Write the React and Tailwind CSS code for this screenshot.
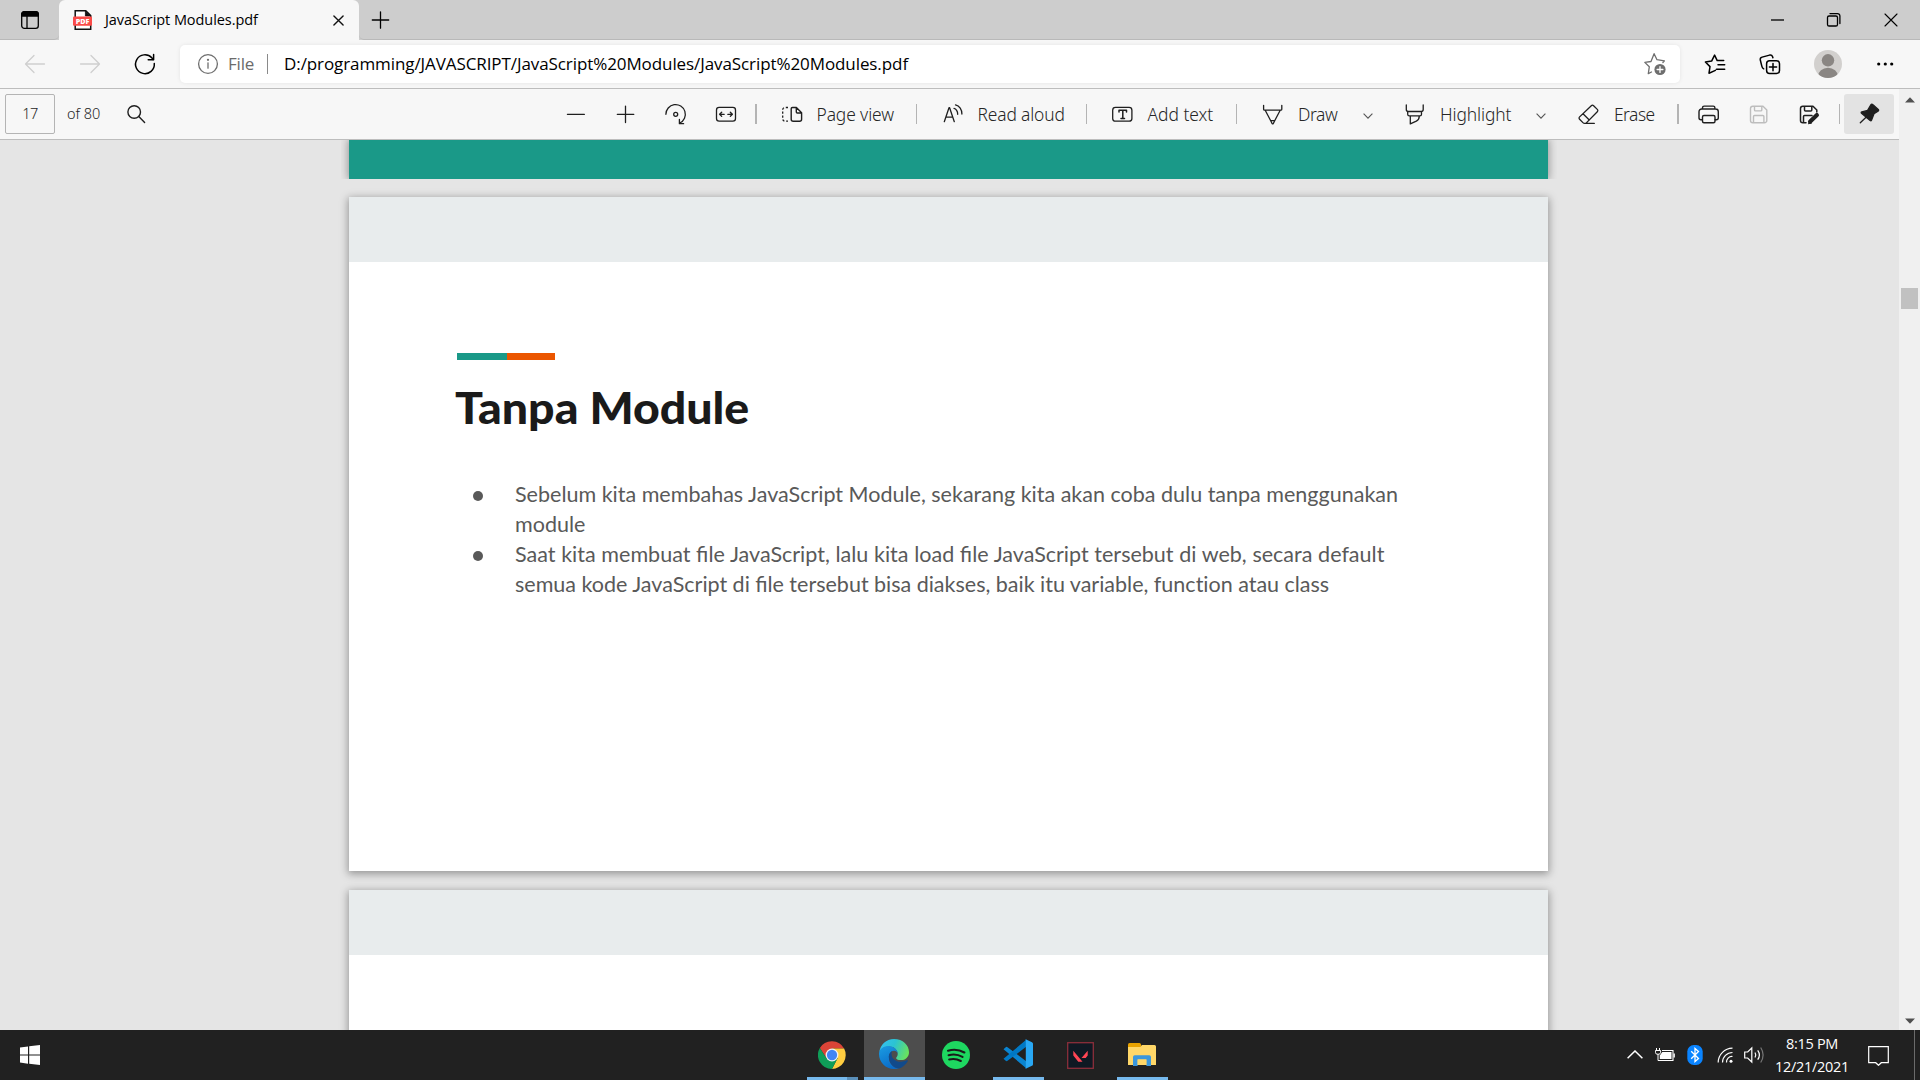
import React from "react";

/* Outline icon on a 30px grid */
function Icon({ children, className = "" }) {
  return (
    <svg
      viewBox="0 0 30 30"
      className={`block h-[30px] w-[30px] shrink-0 ${className}`}
      fill="none"
      stroke="currentColor"
      strokeWidth="1.3"
      strokeLinecap="round"
      strokeLinejoin="round"
    >
      {children}
    </svg>
  );
}

function TabStrip() {
  return (
    <div className="flex h-10 shrink-0 bg-[#cdcdcd]">
      <div className="flex w-[59px] items-start justify-center rounded-br-[5px] border-b border-[#b9b9b9] bg-[#cdcdcd] pt-[5px] text-black">
        <Icon>
          <rect x="6.7" y="6.7" width="16.6" height="16.6" rx="2.6" />
          <path d="M6.7 11V9.3a2.6 2.6 0 0 1 2.6-2.6h11.4a2.6 2.6 0 0 1 2.6 2.6V11z" fill="currentColor" />
          <path d="M12 11v12" />
        </Icon>
      </div>
      <div className="flex w-[300px] items-center rounded-t-[6px] bg-[#f7f7f7]">
        <svg viewBox="0 0 20 20" className="ml-[14px] h-5 w-5 shrink-0">
          <path d="M2.2.8h10.6l4.900 4.700v13.700H2.200z" fill="#fff" stroke="#111" strokeWidth="1.5" />
          <path d="M12.400 1v5h5z" fill="#111" stroke="#111" strokeWidth=".8" />
          <rect x="0" y="6.600" width="19" height="9.200" rx="1" fill="#fa4b48" />
          <text x="9.500" y="13.900" textAnchor="middle" fontFamily="Open Sans, sans-serif" fontWeight="800" fontSize="7.200" fill="#fff">PDF</text>
        </svg>
        <span className="ml-3 w-[228px] shrink-0 whitespace-nowrap text-[14.5px] leading-[38px] tracking-[-0.06px] text-black">
          JavaScript Modules.pdf
        </span>
        <svg viewBox="0 0 12 12" className="mt-px h-[11px] w-[11px] shrink-0" stroke="#111" strokeWidth="1.500" strokeLinecap="round">
          <path d="M1 1l10 10M11 1L1 11" />
        </svg>
      </div>
      <div className="flex flex-1 items-start rounded-bl-[5px] border-b border-[#b9b9b9] text-black">
        <Icon className="ml-[6px] mt-[4.5px]">
          <path d="M7.3 15h16.4M15.500 6.800v16.400" />
        </Icon>
        <div className="ml-auto mt-[4.5px] flex">
          <Icon className="mr-[27px]">
            <path d="M9 15h13" strokeLinecap="butt" />
          </Icon>
          <Icon className="mr-[27px]">
            <rect x="8.500" y="11" width="10" height="10" rx="1.600" />
            <path d="M11 8.600h7.500a2.400 2.400 0 0 1 2.400 2.400v7.500" />
          </Icon>
          <Icon className="mr-[14px]">
            <path d="M9 9l12 12M21 9L9 21" strokeWidth="1.100" />
          </Icon>
        </div>
      </div>
    </div>
  );
}

function AddressBar() {
  return (
    <div className="flex h-[49px] shrink-0 items-center border-b border-[#bdbdbd] bg-[#f7f7f7] pb-px text-black">
      <Icon className="ml-5 text-[#cfcfcf]">
        <path d="M24.500 15H5.800M14 6.500L5.500 15l8.500 8.500" />
      </Icon>
      <Icon className="ml-[25px] text-[#cfcfcf]">
        <path d="M5.500 15h18.700M16 6.500L24.500 15 16 23.500" />
      </Icon>
      <Icon className="ml-[25px]">
        <path d="M24.300 14.500a9.400 9.400 0 1 1-2.500-5.700l1.300 1.700" strokeWidth="1.500" />
        <path d="M23.600 5.500v5.200h-5.400" strokeWidth="1.500" />
      </Icon>
      <div className="ml-5 flex h-[38px] w-[1500px] items-center rounded-[5px] bg-white shadow-[0_0_4px_rgba(0,0,0,0.08)]">
        <Icon className="ml-[12.5px] text-[#6e6e6e]">
          <circle cx="15" cy="15" r="9.400" />
          <path d="M15 13.800v5.400" />
          <circle cx="15" cy="10.800" r=".5" fill="currentColor" />
        </Icon>
        <span className="ml-[5.5px] w-[38.5px] text-[17px] tracking-[-0.2px] text-[#6b6b6b]">File</span>
        <span className="mr-4 h-5 w-[1.5px] bg-[#8a8a8a]" />
        <span className="whitespace-nowrap text-[17px] tracking-[-0.087px] text-black">
          D:/programming/JAVASCRIPT/JavaScript%20Modules/JavaScript%20Modules.pdf
        </span>
        <Icon className="ml-auto mr-[10px] text-[#6e6e6e]">
          <path d="M11.500 23.800l-3.200 1.600 1-6.800-4.500-4.400 6.200-.9L14.100 5.500l2.900 6 7.400 1.200-1.500 1.600" transform="translate(0 -.8)" />
          <circle cx="20" cy="20.500" r="5.600" fill="#6e6e6e" stroke="none" />
          <path d="M20 17.600v5.800M17.100 20.500h5.800" stroke="#fff" />
        </Icon>
      </div>
      <Icon className="ml-5">
        <path d="M15.400 21.400L9 24.200l1-6.600-4.600-4.600 6.200-.9 3-6 2.600 5.500h6.500M18 15.700h6.700M16.500 20.300h8.200" strokeWidth="1.500" />
      </Icon>
      <Icon className="ml-[25px]">
        <rect x="11.600" y="11.700" width="12.900" height="12.700" rx="3" strokeWidth="1.500" />
        <path d="M18 14.500v7.200M14.400 18.100h7.200" strokeWidth="1.500" />
        <path d="M8.700 19.800c-1.200-.6-1.600-1.500-1.900-2.700L5.300 11c-.3-1.400.4-2.500 1.800-2.900l7.500-2c1.400-.3 2.500.3 3 1.700l.3 1" strokeWidth="1.500" />
      </Icon>
      <svg viewBox="0 0 28 28" className="ml-[29px] h-7 w-7">
        <defs>
          <clipPath id="avatar"><circle cx="14" cy="14" r="14" /></clipPath>
        </defs>
        <g clipPath="url(#avatar)">
          <rect width="28" height="28" fill="#d2d0ce" />
          <circle cx="14" cy="10.300" r="6.200" fill="#8a8683" />
          <ellipse cx="14" cy="26.500" rx="10" ry="8.700" fill="#8a8683" />
        </g>
      </svg>
      <Icon className="ml-7">
        <g fill="currentColor" stroke="none">
          <circle cx="8.700" cy="15" r="1.600" />
          <circle cx="15.300" cy="15" r="1.600" />
          <circle cx="21.700" cy="15" r="1.600" />
        </g>
      </Icon>
    </div>
  );
}

function Separator({ className = "" }) {
  return <span className={`h-5 shrink-0 bg-[#b4b4b4] ${className}`} />;
}

function Label({ children, size = "text-[17.400px]", className = "" }) {
  return (
    <span className={`shrink-0 whitespace-nowrap font-['Noto_Sans','Open_Sans',sans-serif] font-[350] text-[#262626] ${size} ${className}`}>
      {children}
    </span>
  );
}

function Chevron() {
  return (
    <svg viewBox="0 0 10 6" className="mt-[3px] h-[6px] w-[10px] shrink-0" fill="none" stroke="#555" strokeWidth="1.100">
      <path d="M.6.7L5 5.200 9.400.7" />
    </svg>
  );
}

function PdfToolbar() {
  return (
    <div className="flex h-[51px] shrink-0 items-center border-b border-[#bdbdbd] bg-[#f7f7f7] pl-[5px] text-[#1f1f1f]">
      <div className="flex h-10 w-[50px] items-center justify-center rounded-[2px] border border-[#b4b4b4]">
        <Label size="text-[14.500px]" className="tracking-[-0.500px]">17</Label>
      </div>
      <Label size="text-[14.500px]" className="ml-3 w-[54px]">of 80</Label>
      <Icon>
        <circle cx="13.200" cy="13" r="6.300" strokeWidth="1.400" />
        <path d="M17.800 17.600l5.800 6" strokeWidth="1.400" />
      </Icon>
      <div className="ml-[410px] flex items-center gap-5">
        <Icon><path d="M6.400 15.300h17" /></Icon>
        <Icon><path d="M6.300 15.300h16.500M14.500 7.100v16.500" /></Icon>
        <Icon>
          <path d="M4.900 15.300a9.700 9.700 0 1 1 13.900 8.700M18.400 20.500v4.200h4.200" />
          <circle cx="14.700" cy="15.300" r="2" />
        </Icon>
        <Icon>
          <rect x="5.500" y="8.400" width="19" height="13.800" rx="2.600" />
          <path d="M13.200 15.300H8.800M10.700 13.200l-2.100 2.100 2.100 2.100M16.800 15.300h4.400M19.300 13.200l2.100 2.100-2.100 2.100" />
        </Icon>
      </div>
      <Separator className="ml-[14px] w-[1.500px]" />
      <Icon className="ml-[20px]">
        <path d="M11 8.500H8a2.300 2.300 0 0 0-2.300 2.300v9A2.300 2.300 0 0 0 8 22.200h3" strokeDasharray="2.200 1.800" strokeLinecap="butt" />
        <path d="M14.200 9.700c0-.8.500-1.200 1.200-1.200h4l5.200 5.200v6.500a2 2 0 0 1-2 2h-6.400a2 2 0 0 1-2-2zM19.300 8.500V13a1 1 0 0 0 1 1h4.300" strokeWidth="1.400" />
      </Icon>
      <Label className="ml-[10px] w-[99px] tracking-[-0.100px]">Page view</Label>
      <Separator className="w-px" />
      <Icon className="ml-[22px]">
        <path d="M5.300 22.700L10 8.700h.6l4.700 14M6.900 18.200h6.800" />
        <path d="M15 9.300c2 .4 3.800 3 3.700 6M16.500 5.800c4 1 6.500 5 6.400 9.300" />
      </Icon>
      <Label className="ml-[9px] w-[108px] tracking-[-0.150px]">Read aloud</Label>
      <Separator className="w-[1.500px]" />
      <Icon className="ml-[19.500px]">
        <rect x="5.700" y="8.400" width="19.200" height="13.800" rx="2.800" />
        <path d="M12 13v-1.700h7.500V13M15.800 11.300v8M14 19.400h3.500" strokeWidth="1.500" />
      </Icon>
      <Label className="ml-[11px] w-[88px]">Add text</Label>
      <Separator className="w-px" />
      <Icon className="ml-[21.500px]">
        <path d="M5.600 6.300v3.900a1 1 0 0 0 1 1h16.200a1 1 0 0 0 1-1V6.300M7.200 11.200l5.500 10.600 1.500 3h1l1.500-3 5.500-10.600M12.700 21.600h4" />
      </Icon>
      <Label className="ml-[10px] w-[65px] tracking-[-0.400px]">Draw</Label>
      <Chevron />
      <Icon className="ml-[27px]">
        <path d="M6.300 5.900v4.600a2 2 0 0 0 2 2h12.900a2 2 0 0 0 2-2V5.900M7.700 12.600v2.600c0 1 .7 1.600 1.600 1.600h10.600c1 0 1.600-.6 1.600-1.600v-2.600M10.300 16.900v8l6-2.800c2-1 3-2 3-5.200" />
      </Icon>
      <Label className="ml-[10px] w-[96px] tracking-[-0.100px]">Highlight</Label>
      <Chevron />
      <Icon className="ml-[27px]">
        <path d="M18.300 6.700c.7-.7 1.600-.7 2.300 0l3.700 3.700c.7.7.7 1.600 0 2.300L13.600 23.600c-1 1-2.700 1-3.700 0l-3.300-3.300c-.7-.7-.7-1.700 0-2.400zM10 14.800l6.300 6.200M11.500 24.400h9.800" />
      </Icon>
      <Label className="ml-[11px] w-[63px] tracking-[-0.500px]">Erase</Label>
      <Separator className="w-[1.500px]" />
      <Icon className="ml-[15px]">
        <path d="M8.500 10V8.800a1.700 1.700 0 0 1 1.700-1.700h9a1.700 1.700 0 0 1 1.700 1.700V10M8.300 20.800H7a2 2 0 0 1-2-2v-6A2.700 2.700 0 0 1 7.700 10h13.900a2.700 2.700 0 0 1 2.700 2.700v6a2 2 0 0 1-2 2h-1.200" strokeWidth="1.400" />
        <rect x="8.500" y="16.500" width="12.500" height="7.200" rx="1.500" strokeWidth="1.400" />
      </Icon>
      <Icon className="ml-[20px] text-[#bdbdbd]">
        <path d="M6.500 9.500a2.300 2.300 0 0 1 2.300-2.300H19L22.800 11v10.500a2.300 2.300 0 0 1-2.300 2.300H8.800a2.300 2.300 0 0 1-2.300-2.300zM10.500 7.200v3.700a1 1 0 0 0 1 1h5.300a1 1 0 0 0 1-1V7.200M9.500 23.800v-6.300a1 1 0 0 1 1-1h8.400a1 1 0 0 1 1 1v6.300" strokeWidth="1.400" />
      </Icon>
      <Icon className="ml-[20px]">
        <path d="M12 23.800H8.800a2.300 2.300 0 0 1-2.300-2.300v-12a2.300 2.300 0 0 1 2.300-2.300H19L22.800 11v2M10.500 7.200v3.700a1 1 0 0 0 1 1h5.300a1 1 0 0 0 1-1V7.200M9.500 23.800v-6.300a1 1 0 0 1 1-1h7.500" strokeWidth="1.500" />
        <path d="M16.200 22.600l6.700-6.500" strokeWidth="4.200" />
        <path d="M14 25.200l.8-4 3.300 3.200z" fill="currentColor" stroke="none" />
      </Icon>
      <Separator className="ml-[15px] w-px" />
      <div className="ml-auto mr-[5px] flex h-10 w-[50px] items-center justify-center rounded-[3px] bg-[#e3e3e3]">
        <Icon>
          <path d="M17 5.700c.5-.8 1.100-.8 1.700-.2l5.600 5c.6.600.4 1.200-.3 1.600l-4 2.700-2.400 6.300c-.3.800-.9.900-1.500.3L7.500 14.300c-.6-.6-.4-1.200.4-1.400l5.700-1.500zM11.800 18.500l-5.500 5.200" fill="currentColor" />
        </Icon>
      </div>
    </div>
  );
}

function SlidePage({ children, className = "" }) {
  return (
    <section className={`w-[1199px] shrink-0 bg-white shadow-[0_2px_8px_1px_rgba(0,0,0,0.35)] ${className}`}>
      <div className="h-[65px] bg-[#e8eced]" />
      {children}
    </section>
  );
}

function Bullet({ children }) {
  return (
    <li className="flex">
      <span className="mr-[32px] mt-[12px] h-[10px] w-[10px] shrink-0 rounded-full bg-[#595959]" />
      <span className="flex flex-col whitespace-nowrap">{children}</span>
    </li>
  );
}

function Document() {
  return (
    <main className="flex flex-1 flex-col overflow-hidden bg-[#e5e5e5] pl-[349px] font-['Lato',sans-serif]">
      <div className="-ml-2 w-[1216px] shrink-0 overflow-hidden pl-2">
        <div className="h-[39px] w-[1199px] bg-[#1a9988] shadow-[0_0_8px_1px_rgba(0,0,0,0.35)]" />
      </div>
      <SlidePage className="mt-[18px] h-[674px]">
        <div className="ml-[108px] mt-[91px] flex h-[7px]">
          <span className="w-[50px] bg-[#1a9988]" />
          <span className="w-12 bg-[#eb5600]" />
        </div>
        <h1 className="ml-[105.500px] mt-[21px] w-max origin-left scale-x-[1.072] whitespace-nowrap text-[43.330px] font-black leading-[52px] text-[#1a1a1a]">
          Tanpa Module
        </h1>
        <ul className="ml-[124px] mt-[46px] text-[21.530px] leading-[30px] text-[#595959]">
          <Bullet>
            <span>Sebelum kita membahas JavaScript Module, sekarang kita akan coba dulu tanpa menggunakan</span>
            <span>module</span>
          </Bullet>
          <Bullet>
            <span className="[word-spacing:0.170px]">Saat kita membuat file JavaScript, lalu kita load file JavaScript tersebut di web, secara default</span>
            <span className="[word-spacing:-0.100px]">
              semua kode JavaScript di file tersebut bisa diakses, baik itu variable,{" "}
              <span className="[font-variant-ligatures:none]">function</span> atau class
            </span>
          </Bullet>
        </ul>
      </SlidePage>
      <SlidePage className="mt-[19px] h-[674px]" />
    </main>
  );
}

function Scrollbar() {
  return (
    <div className="flex w-[21px] shrink-0 flex-col items-center bg-[#f0f0f0]">
      <svg viewBox="0 0 10 6" className="mt-[8px] h-[6px] w-[10px]"><path d="M0 5.500L5 .3l5 5.200z" fill="#505050" /></svg>
      <div className="mt-[185px] h-[21px] w-[17px] bg-[#c1c1c1]" />
      <svg viewBox="0 0 10 6" className="mb-[6px] mt-auto h-[6px] w-[10px]"><path d="M0 .5L5 5.700 10 .5z" fill="#505050" /></svg>
    </div>
  );
}

function TaskButton({ children, className = "", bar = "w-[51px] bg-[#76b9ed]" }) {
  return (
    <div className={`flex h-[50px] w-[61px] shrink-0 flex-col items-center ${className}`}>
      <div className="flex flex-1 items-center pr-px pt-[3px]">{children}</div>
      <div className={`h-[3px] ${bar}`} />
    </div>
  );
}

function Taskbar() {
  return (
    <footer className="flex h-[50px] shrink-0 bg-[#212121] text-white">
      <svg viewBox="0 0 20 20" className="ml-5 mt-[15px] h-5 w-5" fill="#fff">
        <path d="M0 2.500L8 1.400V9.400H0zM9.200 1.200L20 0v9.400H9.200zM0 10.500h8v8.200l-8-1.200zM9.200 10.500H20V20L9.200 18.800z" />
      </svg>
      <div className="ml-[762px] flex gap-px">
        <TaskButton bar="w-[51px] bg-linear-to-r from-[#76b9ed] from-78% to-[#5a8fb9] to-78%">
          <svg viewBox="0 0 48 48" className="h-7 w-7">
            <path d="M24 13h20.800A24 24 0 0 0 3.200 12l11.300 17.500z" fill="#db4437" />
            <path d="M33.500 29.500L24 48A24 24 0 0 0 44.800 13H24z" fill="#ffcd40" />
            <path d="M14.500 29.500L3.200 12A24 24 0 0 0 24 48l9.500-18.500z" fill="#0f9d58" />
            <circle cx="24" cy="24" r="11" fill="#f1f1f1" />
            <circle cx="24" cy="24" r="8.800" fill="#4285f4" />
          </svg>
        </TaskButton>
        <TaskButton className="bg-[#4d4d4d]" bar="w-full bg-[#76b9ed]">
          <svg viewBox="0 0 256 256" className="-mt-[3px] h-[30px] w-[30px]">
            <defs>
              <linearGradient id="eTop" x1="0" y1=".3" x2="1" y2=".6">
                <stop offset="0" stopColor="#35c1f1" /><stop offset=".45" stopColor="#2bc3d2" /><stop offset="1" stopColor="#6be35a" />
              </linearGradient>
              <linearGradient id="eMid" x1="0" y1="0" x2=".5" y2="1">
                <stop offset="0" stopColor="#1b9de2" /><stop offset="1" stopColor="#0a6cc9" />
              </linearGradient>
            </defs>
            <path d="M3 113C10 48 62 0 128 0c76 0 128 52 128 112 0 40-32 68-68 68-30 0-42-10-42-18 0-6 14-12 14-34 0-34-30-64-74-64-42 0-72 24-83 49z" fill="url(#eTop)" />
            <path d="M0 128c0-36 32-68 78-68 50 0 82 34 82 66 0-14-14-26-32-26-26 0-44 28-44 56 0 52 42 96 92 92-16 6-32 8-48 8C56 256 0 198 0 128z" fill="url(#eMid)" />
            <path d="M84 150c0-22 12-40 28-48-10 16-6 52 12 68 32 30 76 30 114 12 6-3 10 2 7 7-18 30-44 52-74 62-48 2-87-45-87-101z" fill="#114a8b" />
          </svg>
        </TaskButton>
        <TaskButton bar="w-0">
          <svg viewBox="0 0 28 28" className="h-7 w-7">
            <circle cx="14" cy="14" r="14" fill="#1ed760" />
            <path d="M6 9.700c5.500-1.500 11.500-1 16.400 1.800M6.600 14.200c4.700-1.300 9.700-.7 13.900 1.700M7.200 18.500c4-1 8-.5 11.600 1.500" fill="none" stroke="#1a1a1a" strokeWidth="2.100" strokeLinecap="round" />
          </svg>
        </TaskButton>
        <TaskButton>
          <svg viewBox="0 0 30 30" className="-mt-[2px] h-[30px] w-[30px]">
            <path d="M.5 10.200l2.200-2q.9-.7 1.800 0L23.500 22.500v7z" fill="#0a84d0" />
            <path d="M.5 19.800l2.200 2q.9.700 1.800 0L23.500 7.500v-7z" fill="#0078c4" />
            <path d="M22 0l7 3.200q1 .5 1 1.600v20.400q0 1.100-1 1.600L22 30q.8-.3.800-1.500V1.500Q22.800.3 22 0z" fill="#29a8f4" />
          </svg>
        </TaskButton>
        <TaskButton bar="w-0">
          <svg viewBox="0 0 27 27" className="h-[27px] w-[27px]">
            <rect x=".7" y=".7" width="25.600" height="25.600" fill="#0f1923" stroke="#8c2f3b" strokeWidth="1.300" />
            <path d="M6.300 8.800v4.800l5 6.200h4.200zM20.700 8.800v4.800l-2 2.500h-4.200z" fill="#ff4655" />
          </svg>
        </TaskButton>
        <TaskButton>
          <svg viewBox="0 0 28 24" className="-mt-px h-6 w-7">
            <path d="M0 1.500Q0 0 1.500 0h10q.8 0 1.300 1l1 3H0z" fill="#e8a200" />
            <path d="M0 4h12.500l1.500-2h12.500q1.500 0 1.500 1.500V22H0z" fill="#ffd768" />
            <path d="M5 14q0-1.800 1.800-1.800h14.400Q23 12.200 23 14v9h-4.600v-6.600H9.600V23H5z" fill="#3b97dc" />
            <path d="M9.600 16.400h8.800V22H9.600z" fill="#ffd768" />
          </svg>
        </TaskButton>
      </div>
      <div className="ml-auto flex h-full items-center">
        <svg viewBox="0 0 16 9" className="mb-px h-[9px] w-4" fill="none" stroke="#fff" strokeWidth="1.500"><path d="M.6 8.300L8 1l7.400 7.300" /></svg>
        <svg viewBox="0 0 20 14" className="ml-3 h-[14px] w-5" fill="none" stroke="#fff">
          <path d="M1.500 0v2.500M4.500 0v2.500" strokeWidth="1" />
          <path d="M.4 2.500h5.200v1.800q0 1.600-1.600 1.900H2Q.4 5.900.4 4.300zM3 6.200v6.300" strokeWidth="1" />
          <path d="M7 2.500h11v10H3M19.300 5.500v4" strokeWidth="1.100" />
          <path d="M7.300 4h9.200v7H4.800V7.500z" fill="#fff" stroke="none" />
        </svg>
        <svg viewBox="0 0 16 20" className="ml-[12px] h-5 w-4">
          <rect x=".3" width="15.400" height="20" rx="6.500" fill="#0a84ff" />
          <path d="M4.200 6.300l7.300 7.200L8 16.500v-13l3.500 3L4.200 13.700" fill="none" stroke="#fff" strokeWidth="1.300" />
        </svg>
        <svg viewBox="0 0 17 17" className="ml-[14px] mt-px h-[17px] w-[17px]" fill="none" stroke="#fff" strokeWidth="1.200">
          <circle cx="14" cy="14.200" r="1.500" fill="#fff" stroke="none" />
          <path d="M9.500 15.500a5.500 5.500 0 0 1 6-6M5.500 15.500A10 10 0 0 1 15.500 5.500M1.200 15.500A14.500 14.500 0 0 1 15.500 1.200" />
        </svg>
        <svg viewBox="0 0 21 18" className="ml-[10px] h-[18px] w-[21px]" fill="none" stroke="#fff" strokeWidth="1.200">
          <path d="M.7 6h3l4.100-4v14l-4.100-4h-3z" />
          <path d="M11 6.500q1.600 2.500 0 5M13.700 4.300q3.400 4.700 0 9.400" />
          <path d="M16.700 1.500q4.800 7.500 0 15" stroke="#777" />
        </svg>
        <div className="ml-[9px] w-[76px] text-center text-[14.500px] leading-[23px] tracking-[-0.300px]">
          <div>8:15 PM</div>
          <div>12/21/2021</div>
        </div>
        <svg viewBox="0 0 21 20" className="ml-[18px] mt-[2px] h-5 w-[21px]" fill="none" stroke="#fff" strokeWidth="1.200"><path d="M.7.7h19.600v16h-7L10.500 19.300 7.700 16.700h-7z" /></svg>
        <span className="ml-[25px] mr-[5px] h-full w-px bg-[#6b6b6b]" />
      </div>
    </footer>
  );
}

export default function App() {
  return (
    <div className="flex h-[1080px] w-[1920px] flex-col overflow-hidden bg-[#f7f7f7] font-['Open_Sans','Noto_Sans',sans-serif]">
      <TabStrip />
      <AddressBar />
      <div className="flex min-h-0 flex-1">
        <div className="flex min-w-0 flex-1 flex-col">
          <PdfToolbar />
          <Document />
        </div>
        <Scrollbar />
      </div>
      <Taskbar />
    </div>
  );
}
